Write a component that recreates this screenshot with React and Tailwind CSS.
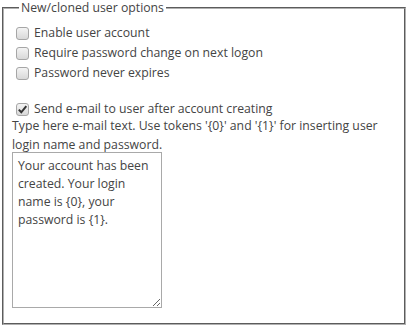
import React from 'react';

const hint = "Type here e-mail text. Use tokens '{0}' and '{1}' for inserting user login name and password.";

const Box = ({ checked }) => (
    <span className="inline-flex w-[13px] h-[13px] shrink-0 items-center justify-center rounded-[3px] border border-[#a6a6a6] bg-gradient-to-b from-[#f4f4f4] to-[#d8d8d8]">
        {checked && (
            <svg width="11" height="11" viewBox="0 0 11 11">
                <path d="M1.8 5.6 L4.3 8.3 L9.3 2.2" fill="none" stroke="#333" strokeWidth="2" />
            </svg>
        )}
    </span>
);

const Option = ({ label, checked }) => (
    <label className="flex items-center h-[20px] pl-[4px] gap-[5px]">
        <Box checked={checked} />
        <span>{label}</span>
    </label>
);

export default function App() {
    return (
        <div className="w-[406px] h-[327px] bg-white text-[#444] text-[12.25px] leading-[18px]" style={{ fontFamily: '"Open Sans", "Noto Sans", sans-serif' }}>
            <fieldset className="ml-[2px] w-[404px] h-[325px] border-2 [border-style:groove] border-[#b0b0b0] px-[8px] pt-[7px]">
                <legend className="ml-[7px] px-[2px] leading-[16px]">New/cloned user options</legend>
                <div className="flex flex-col">
                    <Option label="Enable user account" />
                    <Option label="Require password change on next logon" />
                    <Option label="Password never expires" />
                </div>
                <div className="mt-[16px]">
                    <Option label="Send e-mail to user after account creating" checked />
                </div>
                <p className="mt-[-3px] leading-[19px]">{hint}</p>
                <textarea
                    className="mt-[-2px] block w-[150px] h-[156px] border border-[#a9a9a9] px-[5px] py-[4px] text-[#444] outline-none resize"
                    defaultValue="Your account has been created. Your login name is {0}, your password is {1}."
                />
            </fieldset>
        </div>
    );
}
